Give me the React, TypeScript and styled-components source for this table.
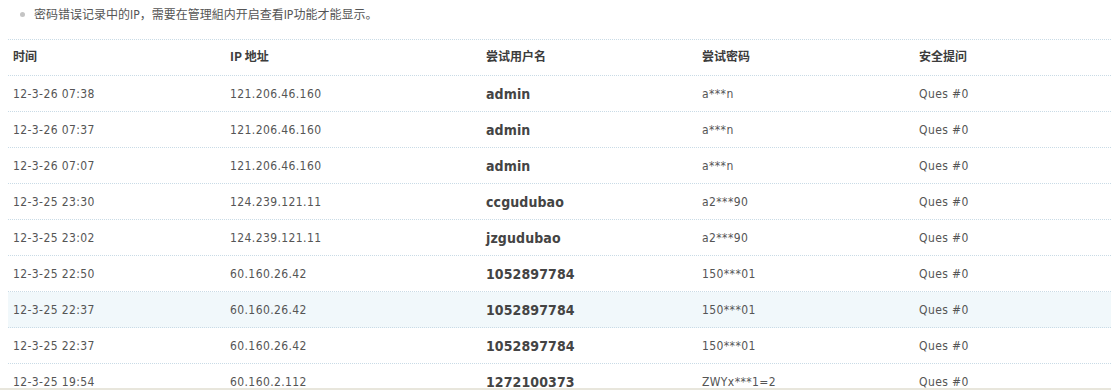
import React from "react";
import styled, { createGlobalStyle } from "styled-components";

const Global = createGlobalStyle`
  html, body { margin: 0; padding: 0; background: #fff; }
  body { font-family: "DejaVu Sans Condensed", "Liberation Sans", "Noto Sans CJK SC", sans-serif; }
`;

const Page = styled.div`
  height: 390px;
  box-sizing: border-box;
  overflow: hidden;
  padding-left: 8px;
  border-bottom: 2px solid #e8e6dc;
`;

const Notes = styled.ul`
  margin: 0;
  padding: 0 0 0 26px;
  height: 39px;
  list-style: none;
`;

const Note = styled.li`
  position: relative;
  padding-top: 7px;
  font-size: 12px;
  line-height: 16px;
  color: #555;
  font-family: "DejaVu Sans Condensed", "Liberation Sans", "Noto Sans CJK SC", sans-serif;
  &::before {
    content: "";
    position: absolute;
    left: -14px;
    top: 12px;
    width: 5px;
    height: 5px;
    border-radius: 50%;
    background: #c4c4c4;
  }
`;

const Table = styled.div`
  border-top: 1px dotted #c9dbe6;
`;

const Row = styled.div<{ $hl?: boolean }>`
  display: grid;
  grid-template-columns: 217px 256px 216px 217px 1fr;
  height: 36px;
  box-sizing: border-box;
  border-bottom: 1px dotted #c9dbe6;
  background: ${(p) => (p.$hl ? "#f1f8fb" : "transparent")};
  align-items: center;
`;

const Head = styled.div`
  padding: 0 5px;
  font-family: "Noto Sans CJK SC", sans-serif;
  font-weight: 700;
  font-size: 12px;
  color: #3c3c3c;
  line-height: 16px;
  margin-top: -3px;
`;

const Cell = styled.div<{ $bold?: boolean }>`
  padding: 0 5px;
  font-size: ${(p) => (p.$bold ? "14px" : "12px")};
  font-weight: ${(p) => (p.$bold ? 700 : 400)};
  letter-spacing: ${(p) => (p.$bold ? "0.1px" : "0.4px")};
  color: ${(p) => (p.$bold ? "#444" : "#555")};
  line-height: 16px;
  white-space: nowrap;
`;

const rows = [
  ["12-3-26 07:38", "121.206.46.160", "admin", "a***n", "Ques #0"],
  ["12-3-26 07:37", "121.206.46.160", "admin", "a***n", "Ques #0"],
  ["12-3-26 07:07", "121.206.46.160", "admin", "a***n", "Ques #0"],
  ["12-3-25 23:30", "124.239.121.11", "ccgudubao", "a2***90", "Ques #0"],
  ["12-3-25 23:02", "124.239.121.11", "jzgudubao", "a2***90", "Ques #0"],
  ["12-3-25 22:50", "60.160.26.42", "1052897784", "150***01", "Ques #0"],
  ["12-3-25 22:37", "60.160.26.42", "1052897784", "150***01", "Ques #0"],
  ["12-3-25 22:37", "60.160.26.42", "1052897784", "150***01", "Ques #0"],
  ["12-3-25 19:54", "60.160.2.112", "1272100373", "ZWYx***1=2", "Ques #0"],
];

export default function App() {
  return (
    <>
      <Global />
      <Page>
        <Notes>
          <Note>密码错误记录中的IP，需要在管理組内开启查看IP功能才能显示。</Note>
        </Notes>
        <Table>
          <Row>
            <Head>时间</Head>
            <Head>IP 地址</Head>
            <Head>尝试用户名</Head>
            <Head>尝试密码</Head>
            <Head>安全提问</Head>
          </Row>
          {rows.map((r, i) => (
            <Row key={i} $hl={i === 6}>
              <Cell>{r[0]}</Cell>
              <Cell>{r[1]}</Cell>
              <Cell $bold>{r[2]}</Cell>
              <Cell>{r[3]}</Cell>
              <Cell>{r[4]}</Cell>
            </Row>
          ))}
        </Table>
      </Page>
    </>
  );
}
